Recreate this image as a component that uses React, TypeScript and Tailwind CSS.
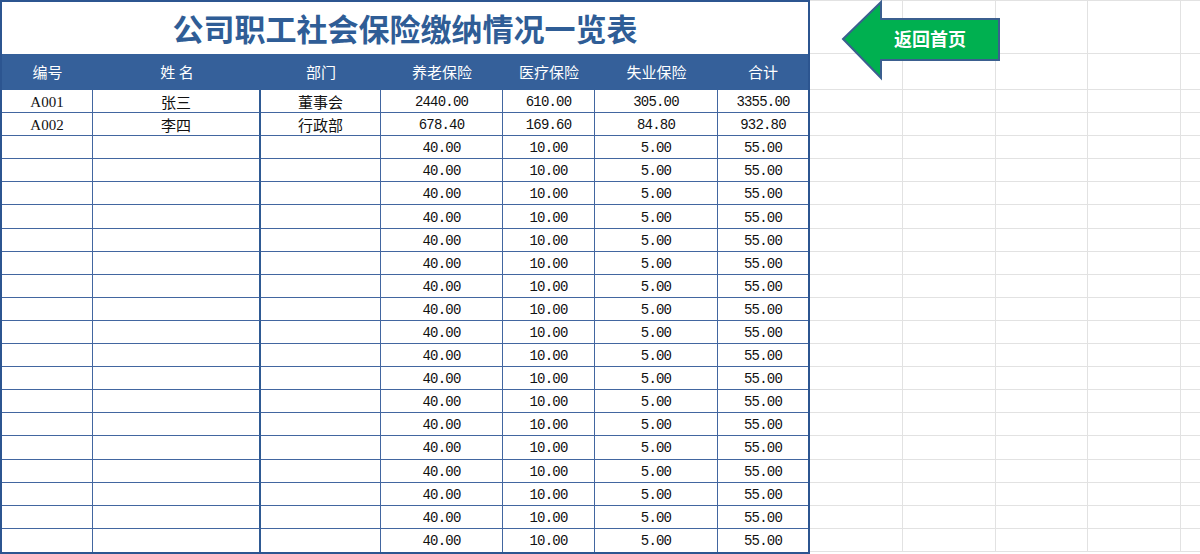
import React from 'react'

const cols = ['w-[91px]', 'w-[168px]', 'w-[120px]', 'w-[122px]', 'w-[92px]', 'w-[123px]', 'w-[90px]']
const headers = ['编号', '姓 名', '部门', '养老保险', '医疗保险', '失业保险', '合计']

const rows: string[][] = [
  ['A001', '张三', '董事会', '2440.00', '610.00', '305.00', '3355.00'],
  ['A002', '李四', '行政部', '678.40', '169.60', '84.80', '932.80'],
  ...Array.from({ length: 18 }, () => ['', '', '', '40.00', '10.00', '5.00', '55.00']),
]

const cjk = "font-['Noto_Sans_CJK_SC',sans-serif]"

function Cell({ i, value, last }: { i: number; value: string; last: boolean }) {
  const font =
    i === 0
      ? "font-['Liberation_Serif',serif] text-[15px]"
      : i < 3
        ? `${cjk} text-[15px]`
        : "font-['Liberation_Mono',monospace] text-[14px] tracking-[-0.8px]"
  return (
    <div
      className={`${cols[i]} shrink-0 flex items-center justify-center pt-[3px] ${
        last ? '' : 'border-b border-[#4266a0]'
      } text-[#111] ${
        i < 6 ? (i === 1 ? 'border-r-2 border-r-[#2f5a93]' : 'border-r border-r-[#4266a0]') : ''
      } ${font}`}
    >
      {value}
    </div>
  )
}

function SideCells({ h }: { h: string }) {
  return (
    <div className={`flex ${h} border-b border-[#e2e2e2]`}>
      <div className="w-[93px] shrink-0 border-r border-[#e2e2e2]" />
      <div className="w-[93px] shrink-0 border-r border-[#e2e2e2]" />
      <div className="w-[92px] shrink-0 border-r border-[#e2e2e2]" />
      <div className="w-[93px] shrink-0 border-r border-[#e2e2e2]" />
      <div className="flex-1" />
    </div>
  )
}

export default function App() {
  return (
    <div className="relative w-[1200px] h-[554px] overflow-hidden bg-white flex">
      {/* table */}
      <div className="w-[810px] h-[554px] shrink-0 border-2 border-[#2c5590] flex flex-col">
        <div className={`h-[52px] shrink-0 flex items-center justify-center pt-[1px] ${cjk} text-[31px] font-bold text-[#2f5d96]`}>
          公司职工社会保险缴纳情况一览表
        </div>
        <div className="h-[36px] shrink-0 flex bg-[#35609a]">
          {headers.map((h, i) => (
            <div key={h} className={`${cols[i]} shrink-0 flex items-center justify-center ${cjk} text-[15px] text-white`}>
              {h}
            </div>
          ))}
        </div>
        {rows.map((r, ri) => (
          <div key={ri} className="h-[23.1px] shrink-0 flex">
            {r.map((v, i) => (
              <Cell key={i} i={i} value={v} last={ri === rows.length - 1} />
            ))}
          </div>
        ))}
      </div>

      {/* sheet grid */}
      <div className="flex-1 flex flex-col border-t border-[#e2e2e2]">
        <SideCells h="h-[53px]" />
        <SideCells h="h-[36px]" />
        {rows.map((_, ri) => (
          <SideCells key={ri} h="h-[23.1px]" />
        ))}
      </div>

      {/* back button */}
      <div className="absolute left-[841px] top-0 w-[160px] h-[81px]">
        <svg width="160" height="81" viewBox="0 0 160 81" className="absolute inset-0">
          <polygon
            points="2,39 40,2 40,19 158,19 158,60 40,60 40,78"
            fill="#00b050"
            stroke="#3b5f8f"
            strokeWidth="2"
            strokeLinejoin="miter"
          />
        </svg>
        <div className={`absolute left-[53px] top-[26px] ${cjk} text-[18px] leading-[24px] font-bold text-white`}>
          返回首页
        </div>
      </div>
    </div>
  )
}
